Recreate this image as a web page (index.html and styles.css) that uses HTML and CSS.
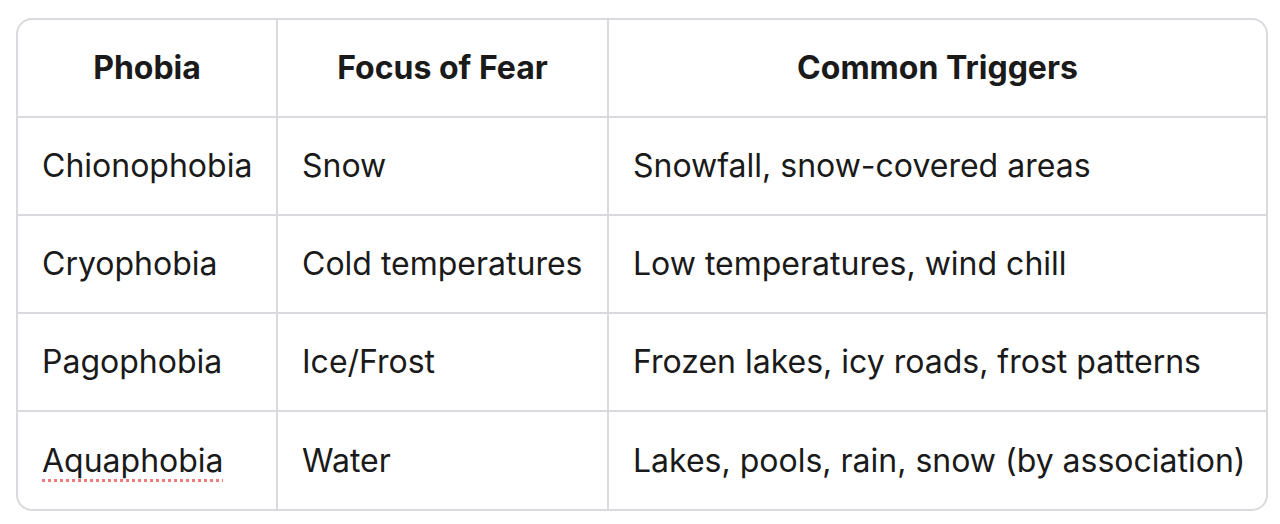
FILE: index.html
```html
<!DOCTYPE html>
<html>
<head>
<meta charset="utf-8">
<link rel="stylesheet" href="styles.css">
</head>
<body>
<div class="wrap">
<table class="tbl">
<thead>
<tr><th class="c1">Phobia</th><th class="c2">Focus of Fear</th><th class="c3">Common Triggers</th></tr>
</thead>
<tbody>
<tr><td>Chionophobia</td><td>Snow</td><td>Snowfall, snow-covered areas</td></tr>
<tr><td>Cryophobia</td><td>Cold temperatures</td><td>Low temperatures, wind chill</td></tr>
<tr><td>Pagophobia</td><td>Ice/Frost</td><td>Frozen lakes, icy roads, frost patterns</td></tr>
<tr><td><span class="spell">Aquaphobia</span></td><td>Water</td><td>Lakes, pools, rain, snow (by association)</td></tr>
</tbody>
</table>
</div>
</body>
</html>
```
FILE: styles.css
```css
html, body {
  margin: 0;
  background: #ffffff;
}
body {
  padding: 18px 0 0 16px;
  font-family: Inter, "Noto Sans", sans-serif;
  color: #1a1a1a;
}
.wrap {
  width: 1248px;
  border: 2px solid #d9d9de;
  border-radius: 16px;
  overflow: hidden;
}
.tbl {
  width: 100%;
  border-collapse: collapse;
  table-layout: fixed;
  font-size: 32px;
}
.c1 { width: 259px; }
.c2 { width: 331px; }
.tbl th, .tbl td {
  border: 2px solid #d9d9de;
  height: 98px;
  padding: 0 24px;
  box-sizing: border-box;
  line-height: 38px;
  white-space: nowrap;
}
.tbl th {
  font-weight: 700;
  text-align: center;
  height: 97px;
}
.tbl td { text-align: left; font-weight: 400; }
.tbl tr:first-child th { border-top: none; }
.tbl tr:last-child td { border-bottom: none; }
.tbl th:first-child, .tbl td:first-child { border-left: none; }
.tbl th:last-child, .tbl td:last-child { border-right: none; }
.spell {
  text-decoration: underline dotted #ef7b7b;
  text-decoration-thickness: 3px;
  text-underline-offset: 7px;
}
```
